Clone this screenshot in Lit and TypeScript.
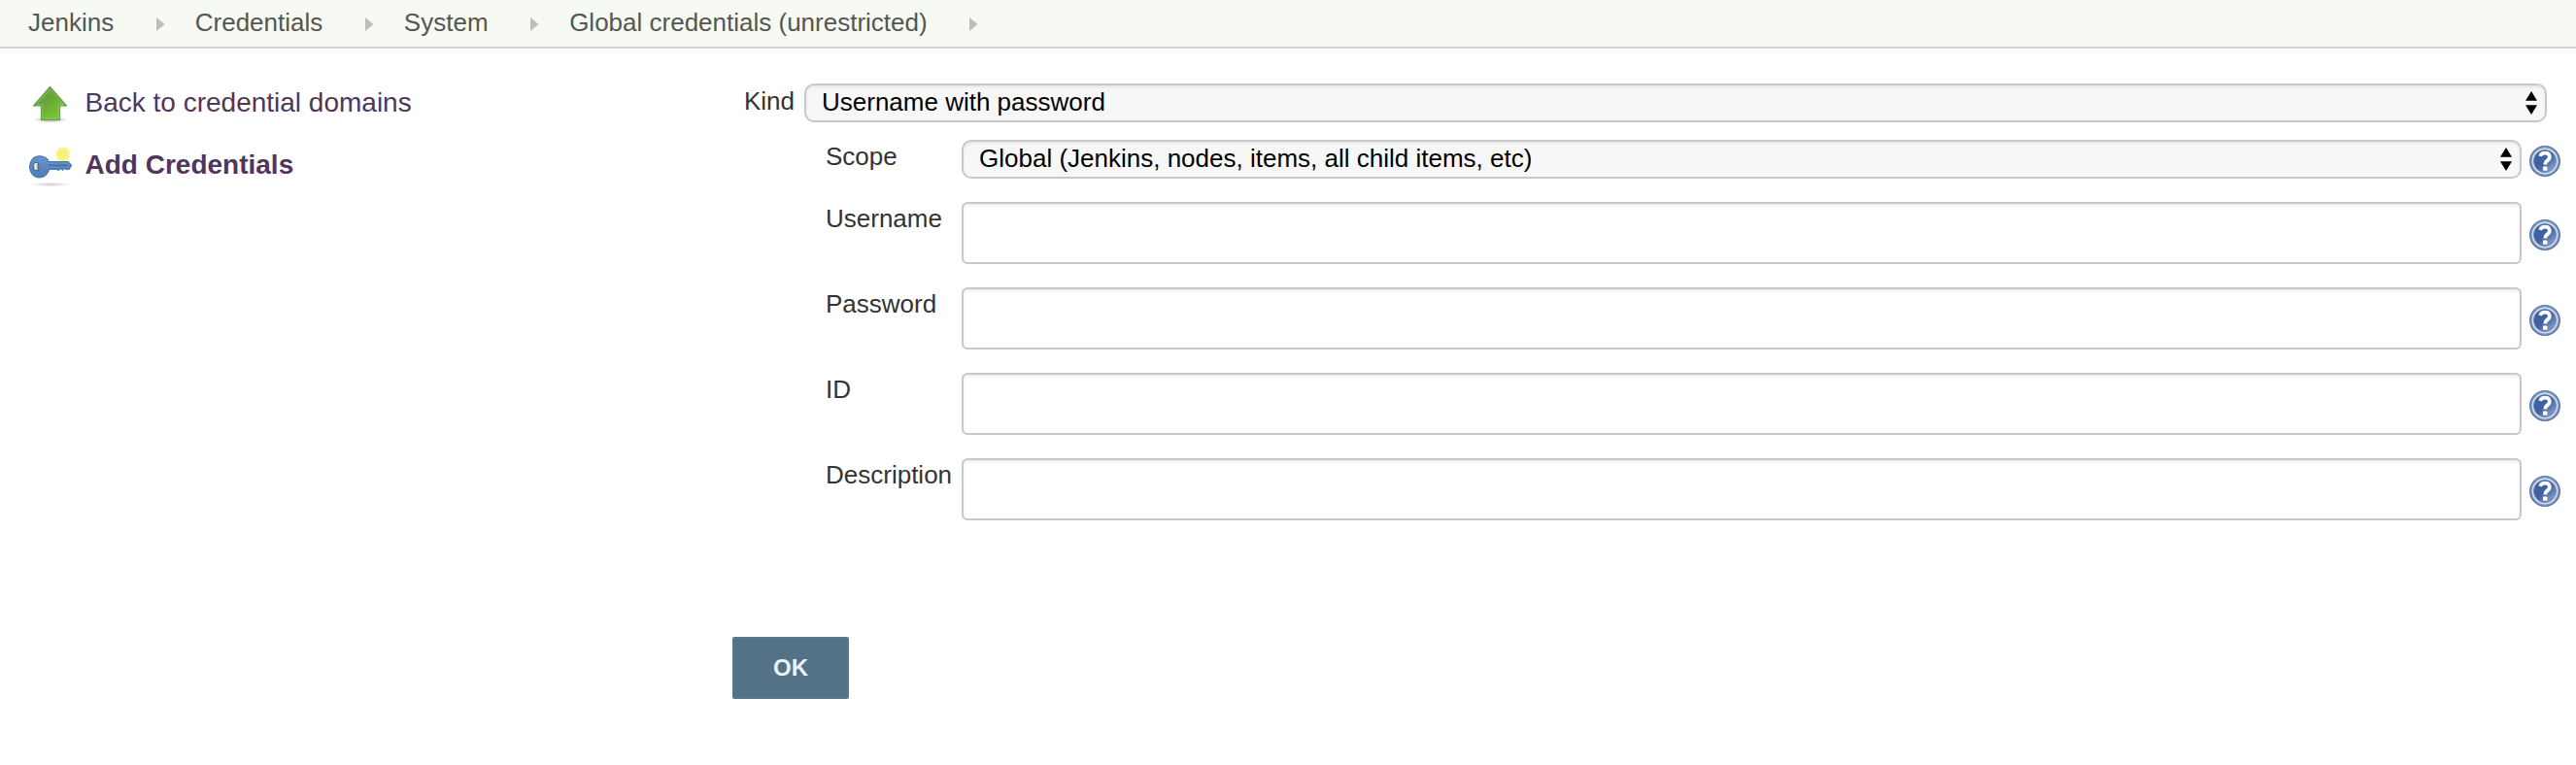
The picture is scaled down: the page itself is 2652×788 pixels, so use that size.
import { LitElement, html, css, svg } from "lit";
import { customElement, property } from "lit/decorators.js";

@customElement("help-icon")
class HelpIcon extends LitElement {
  static styles = css`
    :host { display: block; width: 32px; height: 32px; }
    svg { display: block; }
  `;
  render() {
    return html`<svg width="32" height="32" viewBox="0 0 32 32">
      <defs>
        <linearGradient id="disc" x1="0" y1="0" x2="1" y2="1">
          <stop offset="0" stop-color="#3a60a2" /><stop offset=".5" stop-color="#41629f" /><stop offset="1" stop-color="#9db5dc" />
        </linearGradient>
      </defs>
      <circle cx="16" cy="16" r="15.2" fill="#d3deef" stroke="#58749f" stroke-width="1.6" />
      <circle cx="16" cy="16" r="14" fill="none" stroke="#7892bd" stroke-width="1.2" />
      <circle cx="16" cy="16" r="11.5" fill="url(#disc)" stroke="#5f7fb4" stroke-width=".8" />
      <path d="M11.2 10.8Q11.9 7.6 16 7.6Q20.8 7.6 20.8 11.6Q20.8 14 18.2 15.6Q16.2 17 16.2 19.4" fill="none" stroke="#fff" stroke-width="3.8" />
      <rect x="14" y="21.4" width="4.5" height="4.4" rx=".8" fill="#fff" />
    </svg>`;
  }
}

@customElement("select-box")
class SelectBox extends LitElement {
  @property() value = "";
  static styles = css`
    :host {
      display: flex; align-items: center; justify-content: space-between;
      box-sizing: border-box; height: 40px; padding: 0 8px 0 16px;
      border: 2px solid #c8c8c8; border-radius: 10px; background: #f7f7f7;
      box-shadow: inset 0 2px 3px rgba(0, 0, 0, 0.07);
      color: #000; font-size: 26px; line-height: 34px;
    }
    .value { padding-bottom: 2px; }
    svg { display: block; }
  `;
  render() {
    return html`<span class="value">${this.value}</span>
      <svg width="12" height="24" viewBox="0 0 12 24"><path d="M6 0L12 9.7H0ZM0 14.3H12L6 24Z" fill="#000" /></svg>`;
  }
}

@customElement("app-root")
class AppRoot extends LitElement {
  static styles = css`
    :host {
      display: block; height: 788px; overflow: hidden; background: #fff;
      font-family: "Liberation Sans", Arial, Helvetica, sans-serif;
      font-size: 26px; line-height: 30px; color: #333;
    }
    .crumbs {
      display: flex; align-items: center; box-sizing: border-box; height: 50px;
      padding: 0 0 2px 29px; background: #f6faf2; border-bottom: 2px solid #d3d6cf; color: #545652;
    }
    .crumb { display: flex; align-items: center; white-space: nowrap; }
    .chevron { display: block; margin: 4px 31px 0 43.6px; }
    .page { display: grid; grid-template-columns: 754px 1fr; }
    .tasks { padding: 34px 0 0 28px; }
    .task { display: flex; align-items: center; height: 44px; margin-bottom: 20px; gap: 11.5px; font-size: 28px; color: #50355c; white-space: nowrap; }
    .task.current { font-weight: bold; }
    .task span { padding-bottom: 1px; }
    .icon { display: block; flex: none; }
    .form { padding: 36px 0 0 12px; }
    .kind { display: grid; grid-template-columns: 62px 1794px; }
    .label { padding-top: 3px; white-space: nowrap; }
    .fields { display: flex; flex-direction: column; gap: 24px; padding: 18px 0 0 84px; }
    .field { display: grid; grid-template-columns: 140px 1606px 32px; column-gap: 0; }
    .field help-icon { margin: 18px 0 0 8px; }
    .field .label { padding-top: 2px; }
    .field.select help-icon { margin-top: 6px; }
    .box {
      box-sizing: border-box; height: 64px; border: 2px solid #c8c8c8; border-radius: 6px; background: #fff;
      box-shadow: inset 0 2px 3px rgba(0, 0, 0, 0.08);
    }
    .ok {
      display: block; margin: 120px 0 0 -12px; box-sizing: border-box; width: 120px; height: 64px; padding: 0 0 1px;
      border: 2px solid #54788f; border-radius: 2px; background: #537287;
      color: #eef2f5; font: bold 24px "Liberation Sans", Arial, sans-serif;
    }
  `;

  crumbs = ["Jenkins", "Credentials", "System", "Global credentials (unrestricted)"];
  inputs = ["Username", "Password", "ID", "Description"];

  upArrow = svg`
    <defs>
      <linearGradient id="green" x1="0" y1="0" x2=".6" y2="1">
        <stop offset="0" stop-color="#78a850"/><stop offset=".45" stop-color="#66a338"/><stop offset="1" stop-color="#78c636"/>
      </linearGradient>
      <radialGradient id="ground"><stop offset="0" stop-color="#555" stop-opacity=".6"/><stop offset="1" stop-color="#777" stop-opacity="0"/></radialGradient>
    </defs>
    <ellipse cx="24" cy="39.5" rx="18" ry="3.2" fill="url(#ground)"/>
    <path d="M23.5 5.5L40.5 25H33.5V39.3H14.5V25H6.5Z" fill="url(#green)" stroke="#6c9c50" stroke-width="1.2" stroke-linejoin="round"/>
    <path d="M23.5 8L37.5 23.8H32.2V38H15.8V23.8H9.3Z" fill="none" stroke="#a5d86f" stroke-opacity=".5" stroke-width="1"/>`;

  key = svg`
    <defs>
      <radialGradient id="shade"><stop offset="0" stop-color="#777" stop-opacity=".4"/><stop offset="1" stop-color="#999" stop-opacity="0"/></radialGradient>
      <radialGradient id="spark"><stop offset="0" stop-color="#fffbd0"/><stop offset=".25" stop-color="#f5e96a"/><stop offset=".5" stop-color="#fbf38a"/><stop offset=".8" stop-color="#fdf471"/><stop offset="1" stop-color="#fff78a" stop-opacity="0"/></radialGradient>
      <linearGradient id="steel" x1="0" y1="0" x2="0" y2="1"><stop offset="0" stop-color="#6a95ce"/><stop offset="1" stop-color="#4d7cba"/></linearGradient>
    </defs>
    <ellipse cx="24" cy="42" rx="21" ry="2.6" fill="url(#shade)"/>
    <circle cx="36.7" cy="11" r="8" fill="url(#spark)"/>
    <path d="M12.7 12.8C17.7 12.8 21 15.5 22.3 18.6H42L45.5 22.4L43 26.4H40L38.3 25L36.5 27.2L34.5 25.4L32.5 27.2L30 26.4H22.7C21.2 31.3 17.4 34.8 12.7 34.8C6.5 34.8 2.5 29.8 2.5 23.8S6.5 12.8 12.7 12.8Z" fill="url(#steel)" stroke="#4c76ae" stroke-width="1.2"/>
    <path d="M22 22.3H42" stroke="#4069a2" stroke-width="1.2"/>
    <rect x="6.7" y="19.5" width="5" height="8" rx="2" fill="#f2f4f4" stroke="#45658f" stroke-width="1.2"/>
    <path d="M10.3 20.5V26.5" stroke="#a5a895" stroke-width="1.5"/>`;

  render() {
    return html`
      <nav class="crumbs">
        ${this.crumbs.map((c) => html`<div class="crumb"><span>${c}</span>
          <svg class="chevron" width="9" height="14" viewBox="0 0 9 14"><path d="M0 0L8.5 7L0 14Z" fill="#bcbeba" /></svg></div>`)}
      </nav>
      <div class="page">
        <aside class="tasks">
          <div class="task"><svg class="icon" width="48" height="44" viewBox="0 0 48 44">${this.upArrow}</svg><span>Back to credential domains</span></div>
          <div class="task current"><svg class="icon" width="48" height="44" viewBox="0 0 48 44">${this.key}</svg><span>Add Credentials</span></div>
        </aside>
        <main class="form">
          <div class="kind"><div class="label">Kind</div><select-box value="Username with password"></select-box></div>
          <div class="fields">
            <div class="field select"><div class="label">Scope</div><select-box value="Global (Jenkins, nodes, items, all child items, etc)"></select-box><help-icon></help-icon></div>
            ${this.inputs.map((n) => html`<div class="field"><div class="label">${n}</div><div class="box"></div><help-icon></help-icon></div>`)}
          </div>
          <button class="ok">OK</button>
        </main>
      </div>`;
  }
}
